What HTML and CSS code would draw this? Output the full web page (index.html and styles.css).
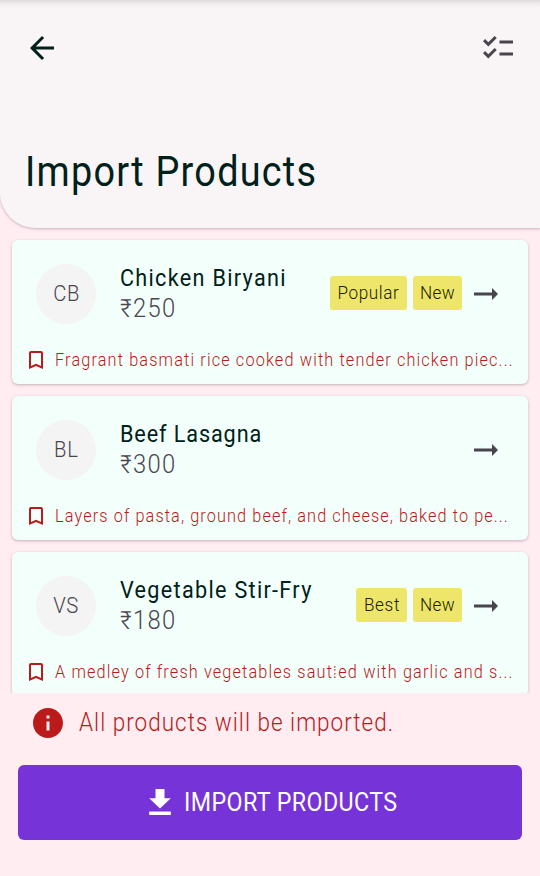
FILE: index.html
```html
<!DOCTYPE html>
<html lang="en">
<head>
<meta charset="utf-8">
<title>Import Products</title>
<link rel="stylesheet" href="styles.css">
</head>
<body>
<svg class="defs" width="0" height="0" aria-hidden="true">
  <symbol id="arrow" viewBox="0 0 24 24"><path d="M16.01 11H4v2h12.010v3L20 12l-3.990-4z"/></symbol>
  <symbol id="bookmark" viewBox="0 0 24 24"><path d="M17 3H7c-1.100 0-2 .9-2 2v16l7-3 7 3V5c0-1.100-.9-2-2-2zm0 15-5-2.180L7 18V5h10v13z"/></symbol>
</svg>
<div class="screen">
  <header class="header">
    <div class="toolbar">
      <svg class="icon back" viewBox="0 0 24 24"><path d="M20 11H7.830l5.590-5.590L12 4l-8 8 8 8 1.410-1.410L7.830 13H20v-2z"/></svg>
      <svg class="icon checklist" viewBox="0 0 24 24"><path d="M22 7h-9v2h9V7zm0 8h-9v2h9v-2zM5.540 11 2 7.460l1.410-1.410 2.120 2.120 4.240-4.240 1.410 1.410L5.540 11zm0 8L2 15.460l1.410-1.410 2.120 2.120 4.240-4.240 1.410 1.410L5.540 19z"/></svg>
    </div>
    <h1 class="title">Import Products</h1>
  </header>
  <main class="list">
    <article class="card">
      <div class="row">
        <div class="avatar"><span>CB</span></div>
        <div class="info"><div class="name biryani">Chicken Biryani</div><div class="price">₹250</div></div>
        <div class="tags"><div class="tag popular"><span>Popular</span></div><div class="tag new"><span>New</span></div></div>
        <svg class="icon arrow"><use href="#arrow"/></svg>
      </div>
      <div class="note"><svg class="mark"><use href="#bookmark"/></svg><p class="desc">Fragrant basmati rice cooked with tender chicken piec...</p></div>
    </article>
    <article class="card">
      <div class="row">
        <div class="avatar"><span>BL</span></div>
        <div class="info"><div class="name lasagna">Beef Lasagna</div><div class="price">₹300</div></div>
        <svg class="icon arrow"><use href="#arrow"/></svg>
      </div>
      <div class="note"><svg class="mark"><use href="#bookmark"/></svg><p class="desc pasta">Layers of pasta, ground beef, and cheese, baked to pe...</p></div>
    </article>
    <article class="card">
      <div class="row">
        <div class="avatar"><span>VS</span></div>
        <div class="info"><div class="name stirfry">Vegetable Stir-Fry</div><div class="price">₹180</div></div>
        <div class="tags"><div class="tag best"><span>Best</span></div><div class="tag new"><span>New</span></div></div>
        <svg class="icon arrow"><use href="#arrow"/></svg>
      </div>
      <div class="note"><svg class="mark"><use href="#bookmark"/></svg><p class="desc">A medley of fresh vegetables saut<span class="glyph">⁞</span>ed with garlic and s...</p></div>
    </article>
  </main>
  <footer class="footer">
    <div class="message">
      <svg class="icon" viewBox="0 0 24 24"><path d="M12 2C6.480 2 2 6.480 2 12s4.480 10 10 10 10-4.480 10-10S17.520 2 12 2zm1 15h-2v-6h2v6zm0-8h-2V7h2v2z"/></svg>
      <span>All products will be imported.</span>
    </div>
    <button class="import">
      <svg class="icon" viewBox="0 0 24 24"><path d="M19.200 9.500h-4.200V3.300H9v6.200H4.800L12 16.300zM4.800 18.300v2.300h14.400v-2.300z"/></svg>
      <span>IMPORT PRODUCTS</span>
    </button>
  </footer>
</div>
</body>
</html>
```
FILE: styles.css
```css
* { box-sizing: border-box; }
body { margin: 0; background: #ffedf2; font-family: Roboto, "Noto Sans", sans-serif; }
.defs { display: block; }
.screen { height: 876px; display: flex; flex-direction: column; overflow: hidden; background: #ffedf2; }
.icon { width: 36px; height: 36px; fill: currentColor; flex: none; }

.header { height: 228px; flex: none; border-bottom-left-radius: 36px; background: linear-gradient(#dedadc 0, #ece8ea 3px, #f5f1f3 6px, #f9f5f7 10px); box-shadow: 0 1px 3px rgba(70, 30, 50, .3); color: #00201a; }
.toolbar { display: flex; justify-content: space-between; padding: 30px 24px 0; }
.checklist { color: #49454f; }
.title { margin: 76px 0 0 24.5px; font-size: 42px; line-height: 60px; font-weight: 400; letter-spacing: 1.4px; white-space: nowrap; transform: scaleX(.9); transform-origin: left; }

.list { height: 465px; flex: none; overflow: hidden; padding: 12px; display: flex; flex-direction: column; gap: 12px; }
.card { height: 144px; flex: none; border-radius: 6px; background: #f2fffb; box-shadow: 0 1px 3px rgba(70, 30, 50, .3); }
.row { height: 108px; display: flex; align-items: center; padding: 0 24px; }
.avatar { width: 60px; height: 60px; flex: none; border-radius: 50%; background: #f4f4f5; color: #49454f; display: flex; align-items: center; justify-content: center; padding-bottom: 1px; font-size: 22px; font-weight: 350; }
.avatar span { letter-spacing: .8px; margin-right: -.8px; transform: scaleX(.92); }
.info { flex: 1; min-width: 0; margin-left: 24px; white-space: nowrap; line-height: 30px; }
.name { font-size: 24px; line-height: 28px; padding-bottom: 2px; color: #00201a; transform: scaleX(.9); transform-origin: left; }
.biryani, .stirfry { letter-spacing: 1.45px; }
.lasagna { letter-spacing: 1px; }
.price { font-size: 25px; font-weight: 350; color: #49454f; letter-spacing: 1.4px; transform: scaleX(.95); transform-origin: left; }
.tags { display: flex; gap: 6px; margin: -2px 6px 0 0; }
.tag { height: 34px; border-radius: 3px; background: #eee66b; color: #201c00; font-size: 19px; line-height: 34px; font-weight: 350; display: flex; justify-content: center; white-space: nowrap; }
.tag span { letter-spacing: .7px; margin-right: -.7px; transform: scaleX(.9); }
.popular { width: 77px; }
.new { width: 49px; }
.best { width: 51px; }
.tag.new span { letter-spacing: .4px; }
.arrow { color: #49454f; }
.note { height: 24px; display: flex; align-items: center; padding-left: 12px; color: #ba1a1a; }
.mark { width: 24px; height: 24px; flex: none; fill: currentColor; }
.desc { margin: 0 0 0 7px; font-size: 18.5px; line-height: 24px; font-weight: 350; letter-spacing: 1.29px; white-space: nowrap; transform: scaleX(.88); transform-origin: left; }
.pasta { letter-spacing: 1.25px; }
.glyph { display: inline-block; width: 6px; font-size: 17px; letter-spacing: 0; }

.footer { flex: 1; padding: 12px 18px 0; }
.message { height: 36px; display: flex; align-items: center; gap: 13px; padding: 0 0 1px 12px; color: #ba1a1a; font-size: 25px; font-weight: 350; white-space: nowrap; }
.message span { letter-spacing: 1.12px; transform: scaleX(.9); transform-origin: left; }
.import { width: 100%; height: 75px; margin-top: 24px; padding: 0 0 1px; border: 0; border-radius: 6px; background: #7533d8; color: #fff; display: flex; align-items: center; justify-content: center; gap: 6px; font: 400 25px Roboto, sans-serif; white-space: nowrap; }
.import span { letter-spacing: .43px; margin-right: -16px; transform: scaleX(.93); transform-origin: left; }
```
